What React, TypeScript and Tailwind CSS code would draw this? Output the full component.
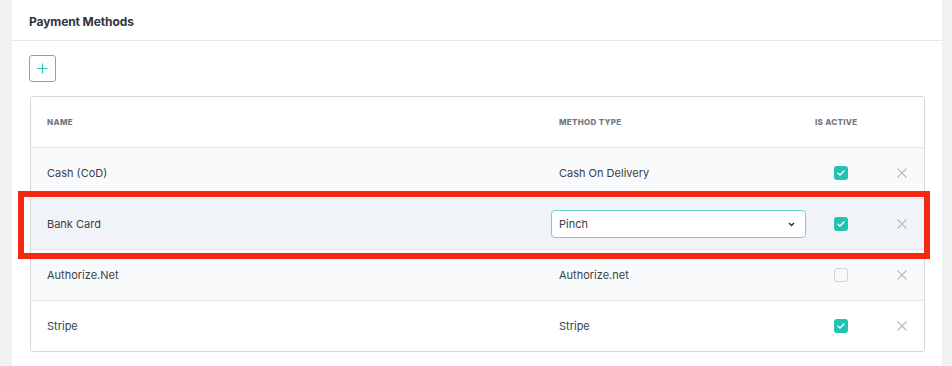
import React from "react";

type Row = { name: string; type: string; active: boolean; bg: string; select?: boolean };

const rows: Row[] = [
  { name: "Cash (CoD)", type: "Cash On Delivery", active: true, bg: "bg-[#f9fafb]" },
  { name: "Bank Card", type: "Pinch", active: true, bg: "bg-[#f0f4f8]", select: true },
  { name: "Authorize.Net", type: "Authorize.net", active: false, bg: "bg-[#f9fafb]" },
  { name: "Stripe", type: "Stripe", active: true, bg: "bg-white" },
];

function Check({ on }: { on: boolean }) {
  if (!on)
    return <div className="w-[14px] h-[14px] rounded-[3px] border border-[#cfd4da] bg-[#f7f8fa]" />;
  return (
    <div className="w-[14px] h-[14px] rounded-[3px] bg-[#22c3b1] flex items-center justify-center">
      <svg width="8" height="6" viewBox="0 0 8 6" fill="none">
        <path d="M1 3.2L3 5L7 1" stroke="white" strokeWidth="1.4" strokeLinecap="round" strokeLinejoin="round" />
      </svg>
    </div>
  );
}

function XIcon() {
  return (
    <svg width="10" height="10" viewBox="0 0 10 10" fill="none">
      <path d="M0.5 0.5L9.5 9.5M9.5 0.5L0.5 9.5" stroke="#b8bcc2" strokeWidth="1.1" />
    </svg>
  );
}

export default function App() {
  return (
    <div className="w-[952px] h-[366px] bg-[#f1f2f4] flex overflow-hidden" style={{ fontFamily: "Inter, 'Noto Sans', sans-serif" }}>
      <div className="ml-[12px] w-[930px] bg-white h-full relative">
        <div className="h-[41px] border-b border-[#e5e7eb] flex items-start pt-[14px] pl-[17px]">
          <span className="text-[12px] leading-[16px] font-bold text-[#30343b] tracking-[-0.1px]">Payment Methods</span>
        </div>
        <div className="pl-[17px] pt-[14px]">
          <button className="w-[27px] h-[27px] border border-[#3cc9b7] rounded-[3px] flex items-center justify-center">
            <svg width="11" height="11" viewBox="0 0 11 11" fill="none">
              <path d="M5.5 0.5V10.5M0.5 5.5H10.5" stroke="#2fc2b0" strokeWidth="1.1" />
            </svg>
          </button>
        </div>
        <div className="ml-[18px] mt-[14px] w-[895px] border border-[#d4d7dc] rounded-[3px] overflow-hidden">
          <div className="grid grid-cols-[511px_273px_64px_1fr] h-[50px] items-center bg-white text-[8px] font-extrabold text-[#737880] tracking-[0.3px]">
            <div className="pl-[16px]">NAME</div>
            <div className="pl-[17px]">METHOD TYPE</div>
            <div>IS ACTIVE</div>
            <div />
          </div>
          {rows.map((r) => (
            <div
              key={r.name}
              className={`grid grid-cols-[511px_273px_64px_1fr] h-[51px] items-center border-t border-[#e6e8eb] text-[11px] text-[#3a3f47] ${r.bg}`}
            >
              <div className="pl-[16px]">{r.name}</div>
              <div className="pl-[9px]">
                {r.select ? (
                  <div className="w-[255px] h-[28px] bg-white border border-[#6ad7ca] rounded-[4px] flex items-center justify-between pl-[7px] pr-[10px]">
                    <span>{r.type}</span>
                    <svg width="7" height="5" viewBox="0 0 7 5" fill="none">
                      <path d="M1 1L3.5 3.5L6 1" stroke="#333" strokeWidth="1.5" />
                    </svg>
                  </div>
                ) : (
                  <span className="pl-[8px]">{r.type}</span>
                )}
              </div>
              <div className="pl-[19px]">
                <Check on={r.active} />
              </div>
              <div className="pl-[18px] flex items-center">
                <XIcon />
              </div>
            </div>
          ))}
        </div>
        <div className="absolute left-[6px] top-[191px] w-[912px] h-[68px] border-[6px] border-[#f42a10] pointer-events-none" />
      </div>
    </div>
  );
}
